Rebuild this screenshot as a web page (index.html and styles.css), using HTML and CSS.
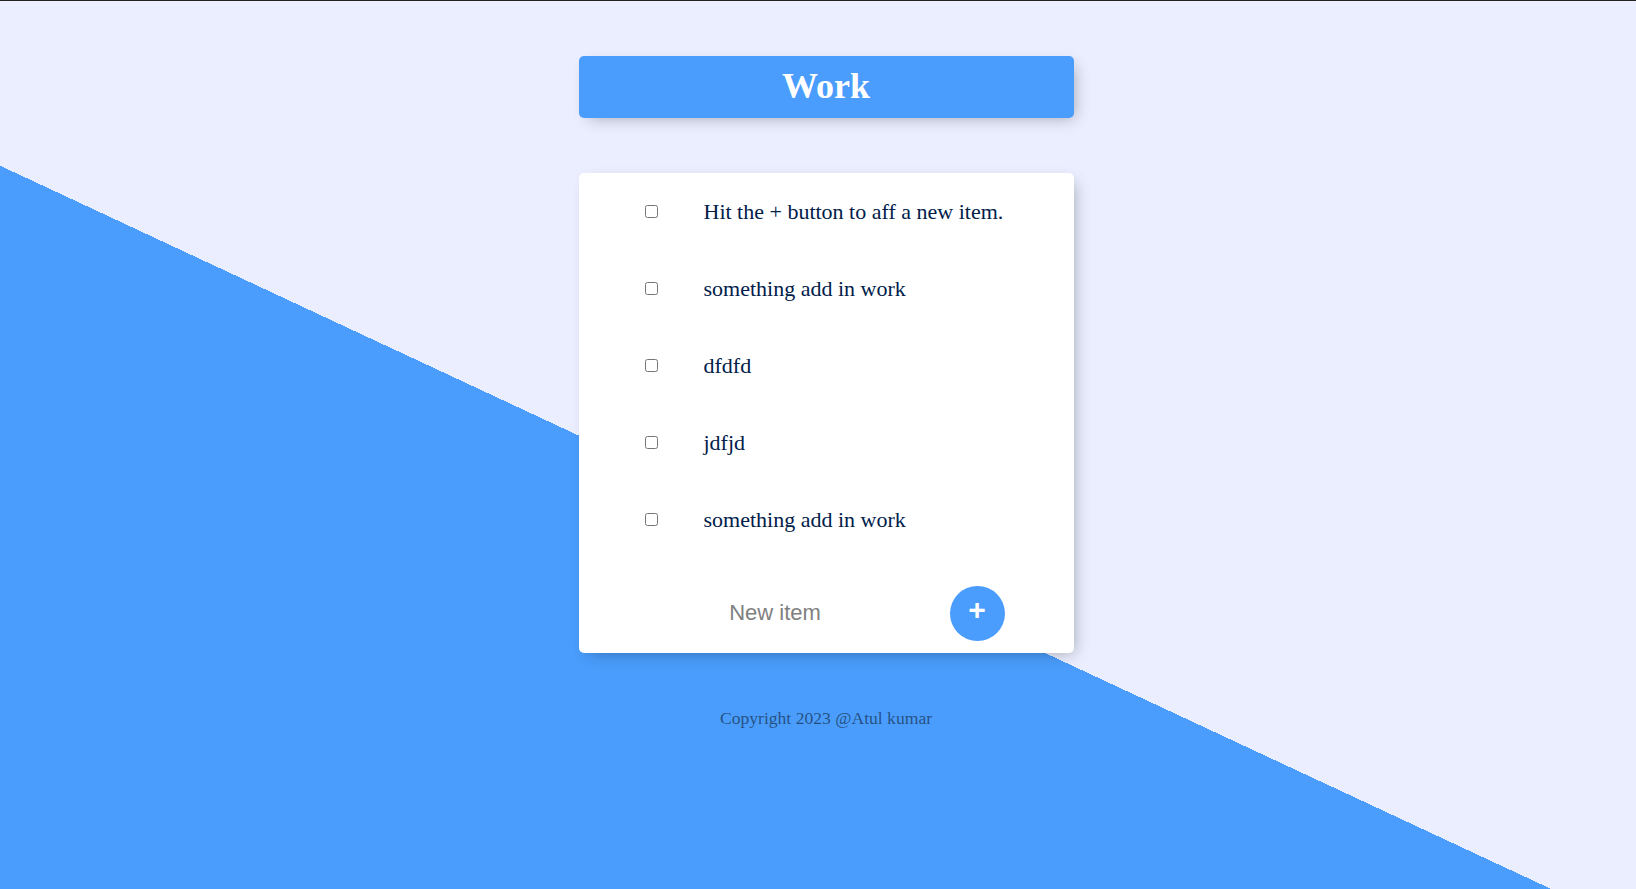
FILE: index.html
```html
<!DOCTYPE html>
<html lang="en">
<head>
<meta charset="utf-8">
<title>Work</title>
<link rel="stylesheet" href="styles.css">
</head>
<body>
<div class="box heading"><h1 class="title">Work</h1></div>
<div class="box list">
  <div class="item"><input class="check" type="checkbox"><p class="text">Hit the + button to aff a new item.</p></div>
  <div class="item"><input class="check" type="checkbox"><p class="text">something add in work</p></div>
  <div class="item"><input class="check" type="checkbox"><p class="text">dfdfd</p></div>
  <div class="item"><input class="check" type="checkbox"><p class="text">jdfjd</p></div>
  <div class="item"><input class="check" type="checkbox"><p class="text">something add in work</p></div>
  <form class="item add-form"><input class="new-item" type="text" name="newItem" placeholder="New item" autocomplete="off"><button class="add-btn" type="submit" name="list">+</button></form>
</div>
<footer class="footer">Copyright 2023 @Atul kumar</footer>
</body>
</html>
```

FILE: styles.css
```css
html {
  height: 100%;
  background-color: #EAEEFE;
  background-image: linear-gradient(25deg, #4A9DFC calc(50% - 93px), #EAEEFE calc(50% - 93px));
}

body {
  margin: 0;
  padding: 0 0 0 16px;
  border-top: 1px solid #222;
  font-family: "Liberation Serif", "Times New Roman", serif;
}

.box {
  width: 495px;
  margin: 55px auto;
  background: #fff;
  border-radius: 5px;
  box-shadow: 5px 5px 15px -5px rgba(0, 0, 0, 0.3);
}

.heading {
  background-color: #4A9DFC;
  text-align: center;
}

.title {
  margin: 0;
  padding: 9px 10px 11px;
  font-size: 36px;
  line-height: 42px;
  font-weight: bold;
  color: #fff;
}

.item {
  box-sizing: border-box;
  height: 77px;
  display: flex;
  align-items: center;
}

.check {
  margin: 0 46px 0 66px;
  width: 13px;
  height: 13px;
  flex: none;
}

.text {
  margin: 0;
  font-size: 22px;
  color: #00204a;
}

.add-form {
  height: 95px;
  padding-top: 15px;
}

.new-item {
  margin: 0 0 0 22px;
  padding: 0;
  width: 349px;
  height: 60px;
  border: none;
  background: transparent;
  text-align: center;
  font-family: "Liberation Sans", Arial, sans-serif;
  font-size: 22px;
  outline: none;
}

.new-item::placeholder {
  color: grey;
  opacity: 1;
}

.add-btn {
  flex: none;
  width: 55px;
  height: 55px;
  border-radius: 50%;
  border: 0;
  background-color: #4A9DFC;
  color: #fff;
  font-family: "Liberation Sans", Arial, sans-serif;
  font-size: 30px;
  font-weight: bold;
  padding: 0 0 6px;
}

.footer {
  text-align: center;
  font-size: 17.6px;
  line-height: 20px;
  color: rgba(0, 0, 0, 0.5);
}
```
